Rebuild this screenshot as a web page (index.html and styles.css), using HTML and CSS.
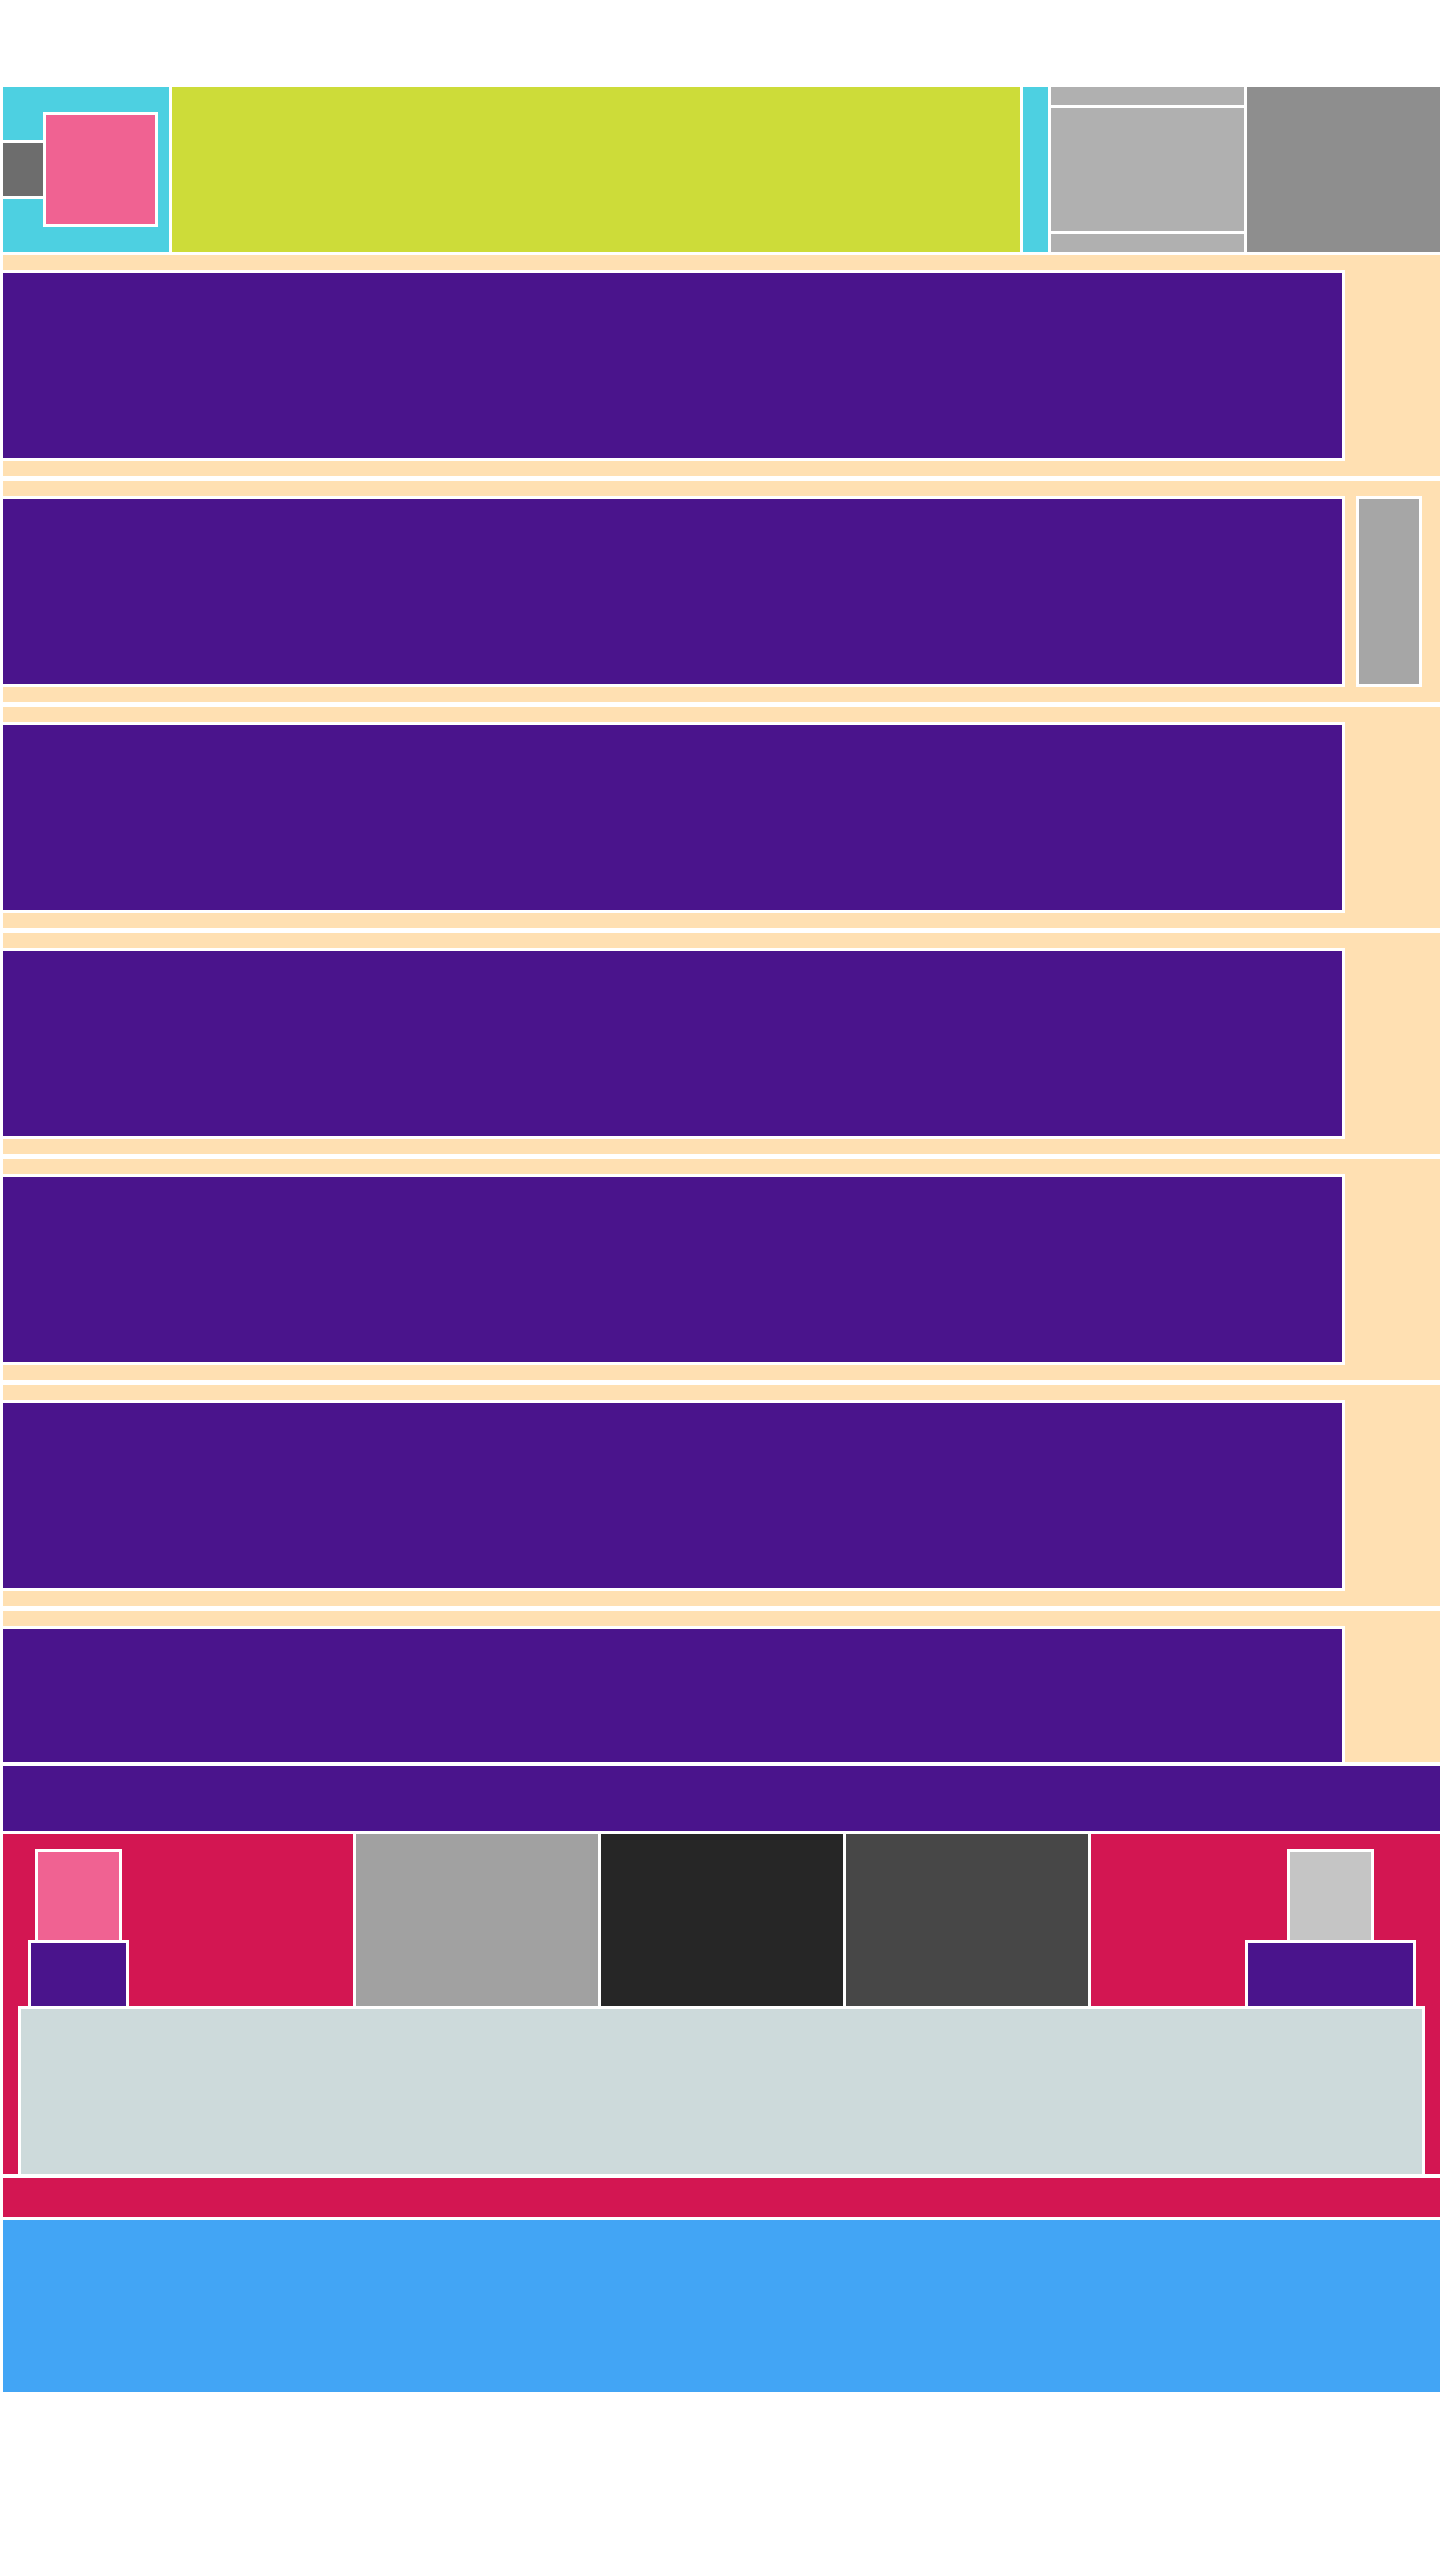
FILE: index.html
```html
<!DOCTYPE html>
<html lang="en">
<head>
  <meta charset="UTF-8">
  <title>Layout</title>
  <link rel="stylesheet" href="styles.css">
</head>
<body>

  <div class="page">

    <header class="top">
      <div class="brand">
        <div class="brand-tab"></div>
        <div class="brand-logo"></div>
      </div>
      <div class="banner"></div>
      <div class="strip"></div>
      <div class="stack">
        <div class="stack-cap"></div>
        <div class="stack-main"></div>
        <div class="stack-cap"></div>
      </div>
      <div class="side"></div>
    </header>

    <div class="list">
      <div class="row"><div class="card"></div></div>
      <div class="row"><div class="card"></div><div class="thumb"></div></div>
      <div class="row"><div class="card"></div></div>
      <div class="row"><div class="card"></div></div>
      <div class="row"><div class="card"></div></div>
      <div class="row"><div class="card"></div></div>
      <div class="row"><div class="card"></div></div>
    </div>

    <div class="bar"></div>

    <section class="hero">
      <div class="hero-top">
        <div class="hero-side">
          <div class="group group-left">
            <div class="icon icon-pink"></div>
            <div class="label label-left"></div>
          </div>
        </div>
        <div class="tile tile-light"></div>
        <div class="tile tile-black"></div>
        <div class="tile tile-dark"></div>
        <div class="hero-side">
          <div class="group group-right">
            <div class="icon icon-grey"></div>
            <div class="label label-right"></div>
          </div>
        </div>
      </div>
      <div class="panel"></div>
    </section>

    <div class="strap"></div>
    <footer class="footer"></footer>

  </div>

</body>
</html>
```

FILE: styles.css
```css
body {
  margin: 0;
  background: #ffffff;
  font-family: "Liberation Sans", Arial, sans-serif;
}

.page {
  padding: 87px 0 0 3px;
}

/* header */
.top {
  display: flex;
  gap: 3px;
  height: 165px;
}

.brand {
  width: 166px;
  background: #4dd0e1;
  display: flex;
  align-items: center;
  gap: 3px;
}

.brand-tab {
  width: 40px;
  height: 53px;
  background: #6d6d6d;
  outline: 3px solid #fff;
}

.brand-logo {
  width: 109px;
  height: 109px;
  background: #f06292;
  outline: 3px solid #fff;
}

.banner {
  flex: 1;
  background: #cddc39;
}

.strip {
  width: 25px;
  background: #4dd0e1;
}

.stack {
  width: 193px;
  display: flex;
  flex-direction: column;
  gap: 3px;
}

.stack-cap {
  height: 18px;
  background: #b0b0b0;
}

.stack-main {
  flex: 1;
  background: #b0b0b0;
}

.side {
  width: 193px;
  background: #8e8e8e;
}

/* list */
.list {
  margin: 3px 0 0 -3px;
  padding-left: 3px;
  height: 1507px;
  overflow: hidden;
  display: flex;
  flex-direction: column;
  gap: 5px;
}

.row {
  flex: none;
  height: 221px;
  box-sizing: border-box;
  padding: 18px 0;
  background: #ffe0b2;
  display: flex;
  gap: 17px;
}

.card {
  width: 1339px;
  background: #4a148c;
  outline: 3px solid #fff;
}

.thumb {
  width: 60px;
  background: #a6a6a6;
  outline: 3px solid #fff;
}

.bar {
  margin-top: 4px;
  height: 65px;
  background: #4a148c;
}

/* hero */
.hero {
  margin-top: 3px;
  height: 340px;
  background: #d31652;
}

.hero-top {
  display: flex;
  gap: 3px;
  height: 172px;
}

.hero-side {
  flex: 1;
}

.group {
  display: flex;
  flex-direction: column;
  align-items: center;
  gap: 3px;
  padding-top: 18px;
}

.group-left {
  width: 95px;
  margin-left: 28px;
}

.group-right {
  width: 165px;
  margin-left: 157px;
}

.icon {
  width: 81px;
  height: 88px;
  outline: 3px solid #fff;
}

.icon-pink { background: #f06292; }
.icon-grey { background: #c5c5c5; }

.label {
  height: 63px;
  background: #4a148c;
  outline: 3px solid #fff;
}

.label-left { width: 95px; }
.label-right { width: 165px; }

.tile {
  width: 242px;
  outline: 3px solid #fff;
}

.tile-light { background: #a1a1a1; }
.tile-black { background: #262626; }
.tile-dark { background: #474747; }

.panel {
  margin: 3px 0 0 18px;
  width: 1401px;
  height: 165px;
  background: #cddadb;
  outline: 3px solid #fff;
}

.strap {
  margin-top: 4px;
  height: 39px;
  background: #d31652;
}

.footer {
  margin-top: 3px;
  height: 172px;
  background: #42a5f5;
}
```
